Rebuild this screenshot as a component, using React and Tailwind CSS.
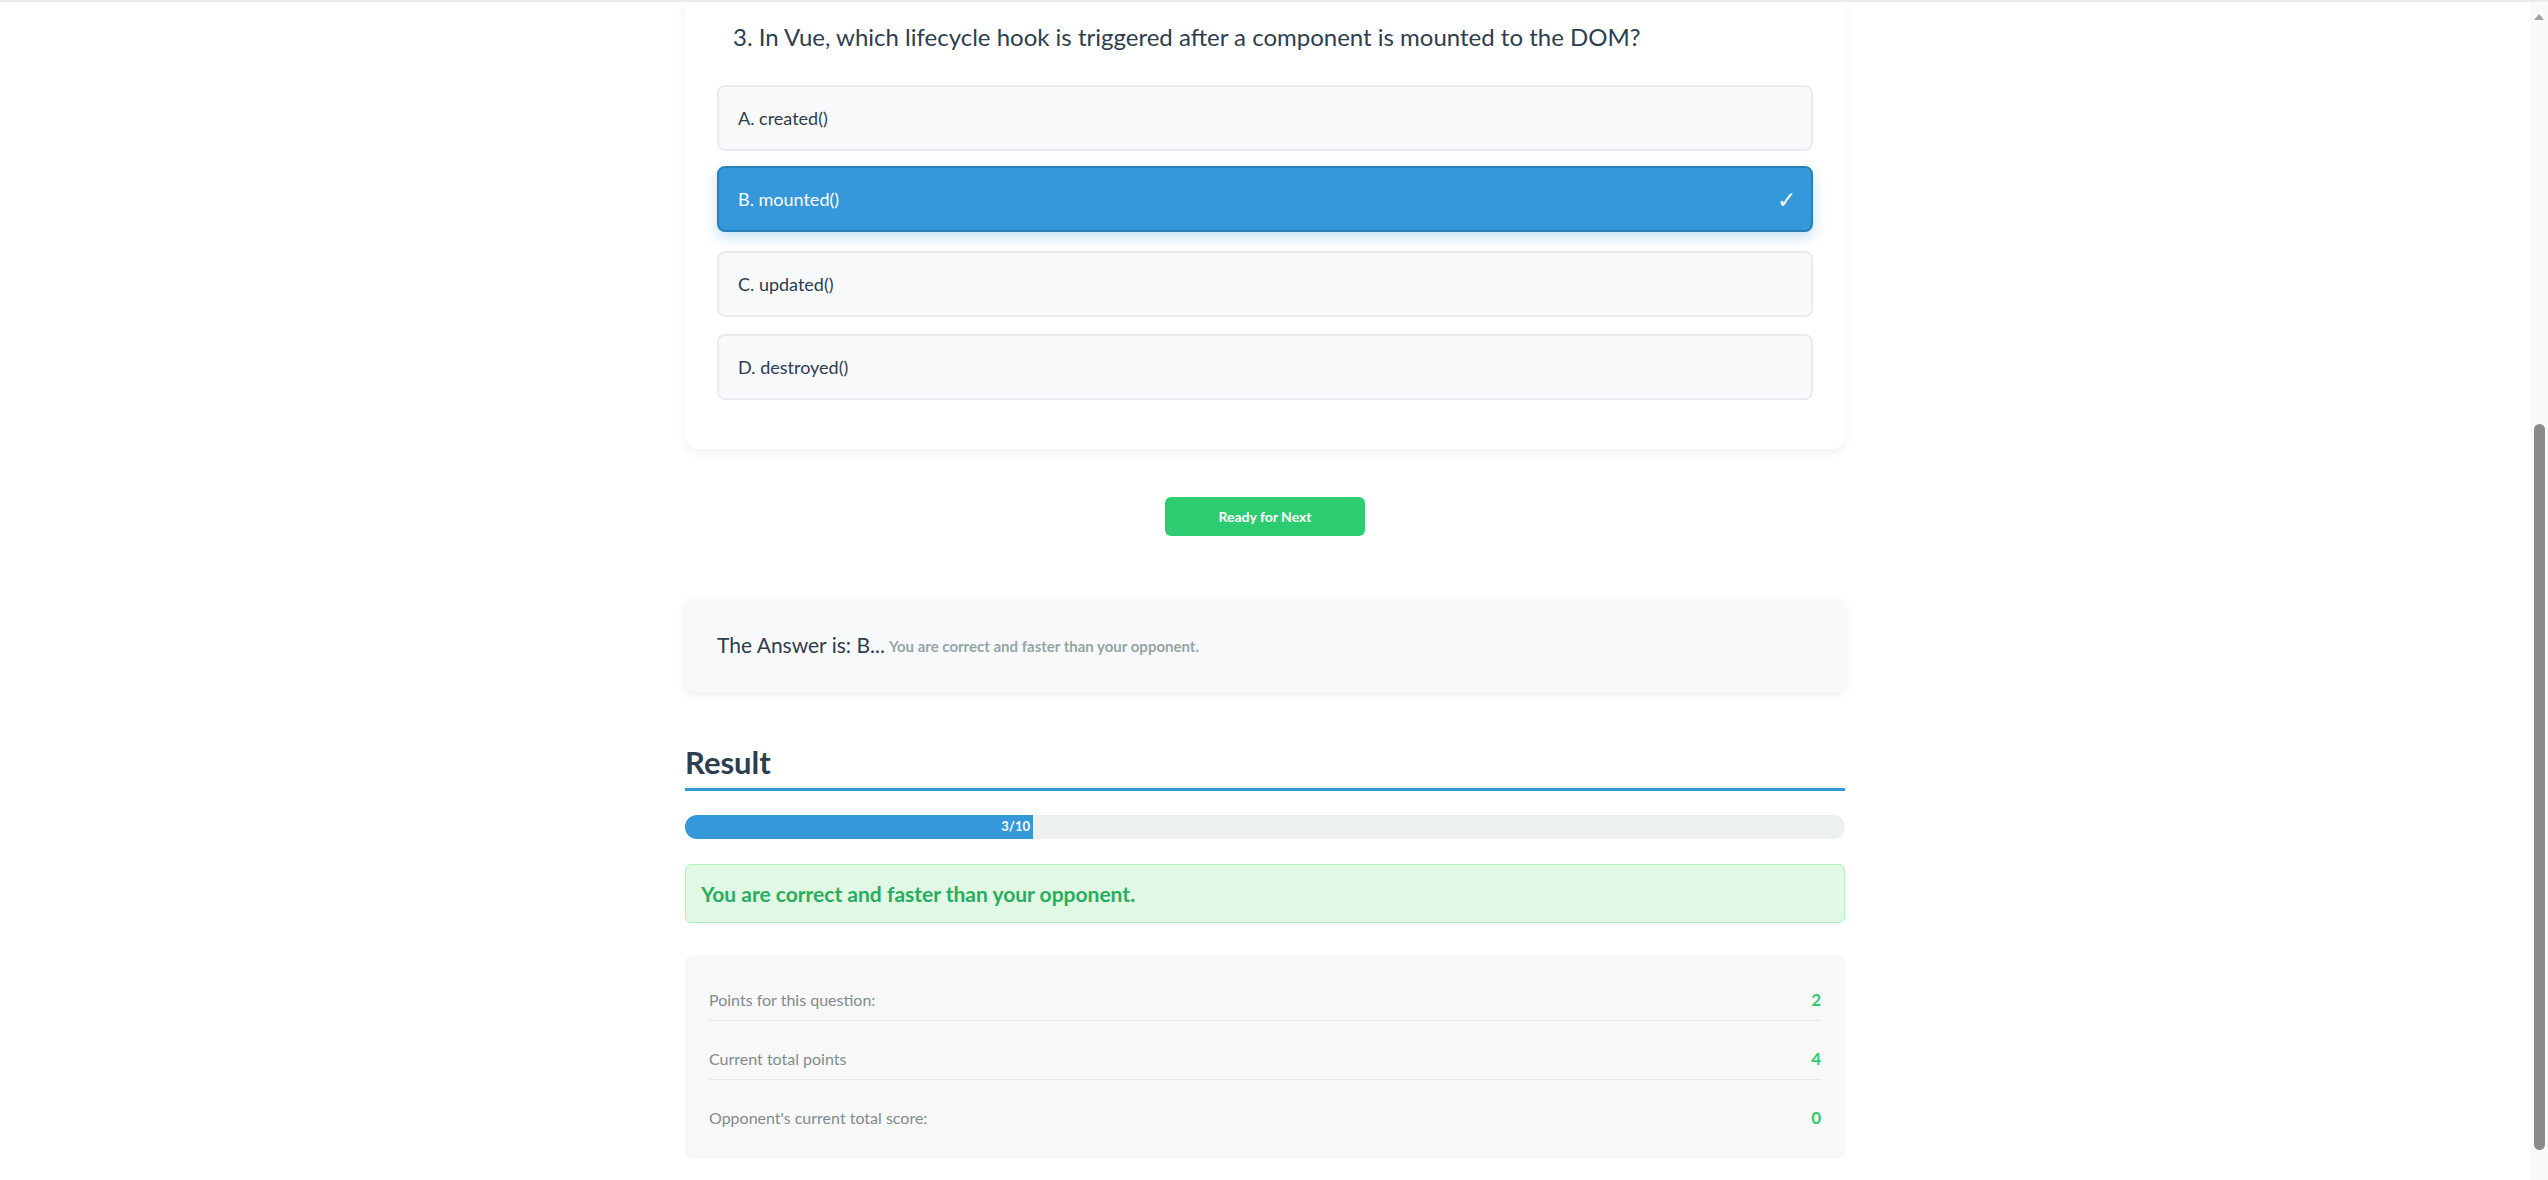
const options = [
  { key: 'A', label: 'created()' },
  { key: 'B', label: 'mounted()' },
  { key: 'C', label: 'updated()' },
  { key: 'D', label: 'destroyed()' },
];

const stats = [
  { label: 'Points for this question:', value: 2 },
  { label: 'Current total points', value: 4 },
  { label: "Opponent's current total score:", value: 0 },
];

function Scrollbar() {
  return (
    <div className="w-[18px] shrink-0 bg-[#f9f9f9] flex flex-col items-center">
      <svg width="10" height="6" viewBox="0 0 10 6" className="mt-[12px]">
        <path d="M5 0 L10 6 L0 6 Z" fill="#a3a3a3" />
      </svg>
      <div className="h-[404px]" />
      <div className="w-[11px] h-[726px] rounded-full bg-[#8a8a8a]" />
    </div>
  );
}

export default function App() {
  const selected = 'B';
  const current = 3;
  const total = 10;

  return (
    <div
      className="h-screen flex overflow-hidden bg-white border-t-2 border-[#ebebeb] text-[#2c3e50]"
      style={{ fontFamily: 'Lato, "Open Sans", sans-serif' }}
    >
      <div className="flex-1 flex justify-center">
        <div className="w-[1160px] flex flex-col">
          {/* question card (top scrolled out of view) */}
          <div className="bg-white rounded-b-xl shadow-[0_4px_10px_rgba(0,0,0,0.06)] px-8 pt-[17px] pb-[49px]">
            <h3 className="text-[24px] leading-[36px] font-normal ml-4 mb-[30px]">
              3. In Vue, which lifecycle hook is triggered after a component is mounted to the DOM?
            </h3>
            <div className="flex flex-col gap-[17px]">
              {options.map((opt) => {
                const isSel = opt.key === selected;
                return (
                  <div
                    key={opt.key}
                    className={
                      isSel
                        ? 'h-[66px] flex items-center justify-between pl-[19px] pr-[15px] rounded-lg border-2 border-[#2980b9] bg-[#3498db] text-white -translate-y-[2px] shadow-[0_5px_14px_rgba(52,152,219,0.3)]'
                        : 'h-[66px] flex items-center justify-between pl-[19px] pr-[15px] rounded-lg border-2 border-[#e9ecef] bg-[#f8f9fa] text-[#2c3e50]'
                    }
                  >
                    <span className="text-[18px]">
                      {opt.key}. {opt.label}
                    </span>
                    {isSel && <span className="text-[23px] leading-none">✓</span>}
                  </div>
                );
              })}
            </div>
          </div>

          <div className="flex justify-center mt-[48px]">
            <button className="w-[200px] h-[39px] rounded-md bg-[#2ecc71] text-white text-[14px] font-bold">
              Ready for Next
            </button>
          </div>

          {/* answer */}
          <div className="mt-[62px] h-[94px] flex items-center px-8 rounded-lg bg-[#f8f9fa] shadow-[0_3px_8px_rgba(0,0,0,0.07)]">
            <span className="text-[21px]">The Answer is: B...</span>
            <span className="ml-1 mt-[3px] text-[15px] font-bold text-[#95a5a6]">
              You are correct and faster than your opponent.
            </span>
          </div>

          {/* result */}
          <h2 className="mt-[52px] text-[31px] leading-[36px] font-bold pb-[8px] border-b-[3px] border-[#3498db]">
            Result
          </h2>

          <div className="mt-[24px] h-[24px] rounded-full bg-[#ecf0f1] overflow-hidden flex">
            <div
              className="h-full bg-[#3498db] flex items-center justify-end pr-[3px]"
              style={{ width: `${(current / total) * 100}%` }}
            >
              <span className="text-white text-[13px] font-bold">
                {current}/{total}
              </span>
            </div>
          </div>

          <div className="mt-[25px] h-[59px] flex items-center px-[15px] rounded-md bg-[#e1f8e4] border border-[#b5efc0]">
            <span className="text-[21px] font-bold text-[#27ae60]">
              You are correct and faster than your opponent.
            </span>
          </div>

          <div className="mt-[32px] rounded-lg bg-[#f8f8f8] px-6 pt-[25px] pb-[21px] flex flex-col gap-[18px]">
            {stats.map((s, i) => (
              <div
                key={s.label}
                className={
                  i < stats.length - 1
                    ? 'flex justify-between items-center py-[10px] border-b border-[#e8e8e8]'
                    : 'flex justify-between items-center py-[10px]'
                }
              >
                <span className="text-[16px] leading-[20px] text-[#7f8c8d]">{s.label}</span>
                <span className="text-[17px] leading-[20px] font-bold text-[#2ecc71]">{s.value}</span>
              </div>
            ))}
          </div>
        </div>
      </div>
      <Scrollbar />
    </div>
  );
}
